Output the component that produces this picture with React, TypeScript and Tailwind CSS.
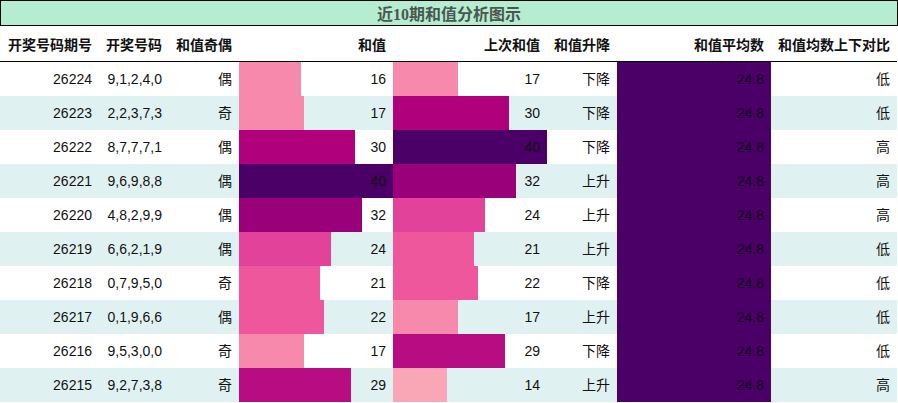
import React from "react";

type Row = {
  id: string;
  nums: string;
  oe: string;
  sum: number;
  prev: number;
  trend: string;
  cmp: string;
};

const rows: Row[] = [
  { id: "26224", nums: "9,1,2,4,0", oe: "偶", sum: 16, prev: 17, trend: "下降", cmp: "低" },
  { id: "26223", nums: "2,2,3,7,3", oe: "奇", sum: 17, prev: 30, trend: "下降", cmp: "低" },
  { id: "26222", nums: "8,7,7,7,1", oe: "偶", sum: 30, prev: 40, trend: "下降", cmp: "高" },
  { id: "26221", nums: "9,6,9,8,8", oe: "偶", sum: 40, prev: 32, trend: "上升", cmp: "高" },
  { id: "26220", nums: "4,8,2,9,9", oe: "偶", sum: 32, prev: 24, trend: "上升", cmp: "高" },
  { id: "26219", nums: "6,6,2,1,9", oe: "偶", sum: 24, prev: 21, trend: "上升", cmp: "低" },
  { id: "26218", nums: "0,7,9,5,0", oe: "奇", sum: 21, prev: 22, trend: "下降", cmp: "低" },
  { id: "26217", nums: "0,1,9,6,6", oe: "偶", sum: 22, prev: 17, trend: "上升", cmp: "低" },
  { id: "26216", nums: "9,5,3,0,0", oe: "奇", sum: 17, prev: 29, trend: "下降", cmp: "低" },
  { id: "26215", nums: "9,2,7,3,8", oe: "奇", sum: 29, prev: 14, trend: "上升", cmp: "高" },
];

function colorFor(v: number): string {
  if (v <= 14) return "#f9a7b7";
  if (v <= 17) return "#f78aac";
  if (v <= 22) return "#ee579b";
  if (v <= 24) return "#e2429a";
  if (v <= 29) return "#b80d82";
  if (v <= 30) return "#b1007b";
  if (v <= 32) return "#9a0079";
  return "#4a0066";
}

const cols = "grid grid-cols-[99px_70px_70px_154px_154px_70px_154px_126px]";

function BarCell({ v }: { v: number }) {
  const w = Math.round((v / 40) * 154);
  return (
    <div className="relative flex items-center justify-end pr-[7px]">
      <div
        className="absolute left-0 top-0 bottom-0"
        style={{ width: w, backgroundColor: colorFor(v) }}
      />
      <span className="relative">{v}</span>
    </div>
  );
}

export default function App() {
  return (
    <div
      className="w-[898px] h-[403px] bg-white text-[14px] text-[#111]"
      style={{ fontFamily: '"Liberation Sans", "Noto Sans CJK SC", sans-serif' }}
    >
      <div
        className="h-[26px] border border-black bg-[#b4edd0] flex items-center justify-center pt-[3px] text-[16px] font-bold text-[#4b5650]"
        style={{ fontFamily: '"Liberation Serif", "Noto Sans CJK SC", serif' }}
      >
        近10期和值分析图示
      </div>
      <div className={`${cols} h-[36px] border-b border-black font-bold w-[897px]`}>
        {["开奖号码期号", "开奖号码", "和值奇偶", "和值", "上次和值", "和值升降", "和值平均数", "和值均数上下对比"].map(
          (h) => (
            <div key={h} className="flex items-center justify-end pr-[7px] pt-[3px]">
              {h}
            </div>
          )
        )}
      </div>
      {rows.map((r, i) => (
        <div
          key={r.id}
          className={`${cols} h-[34px] w-[897px] ${i % 2 === 1 ? "bg-[#e0f1f1]" : "bg-white"}`}
        >
          <div className="flex items-center justify-end pr-[7px]">{r.id}</div>
          <div className="flex items-center justify-end pr-[7px]">{r.nums}</div>
          <div className="flex items-center justify-end pr-[7px]">{r.oe}</div>
          <BarCell v={r.sum} />
          <BarCell v={r.prev} />
          <div className="flex items-center justify-end pr-[7px]">{r.trend}</div>
          <div className="flex items-center justify-end pr-[7px] bg-[#4a0066] text-[#14001c]">24.8</div>
          <div className="flex items-center justify-end pr-[7px]">{r.cmp}</div>
        </div>
      ))}
    </div>
  );
}
